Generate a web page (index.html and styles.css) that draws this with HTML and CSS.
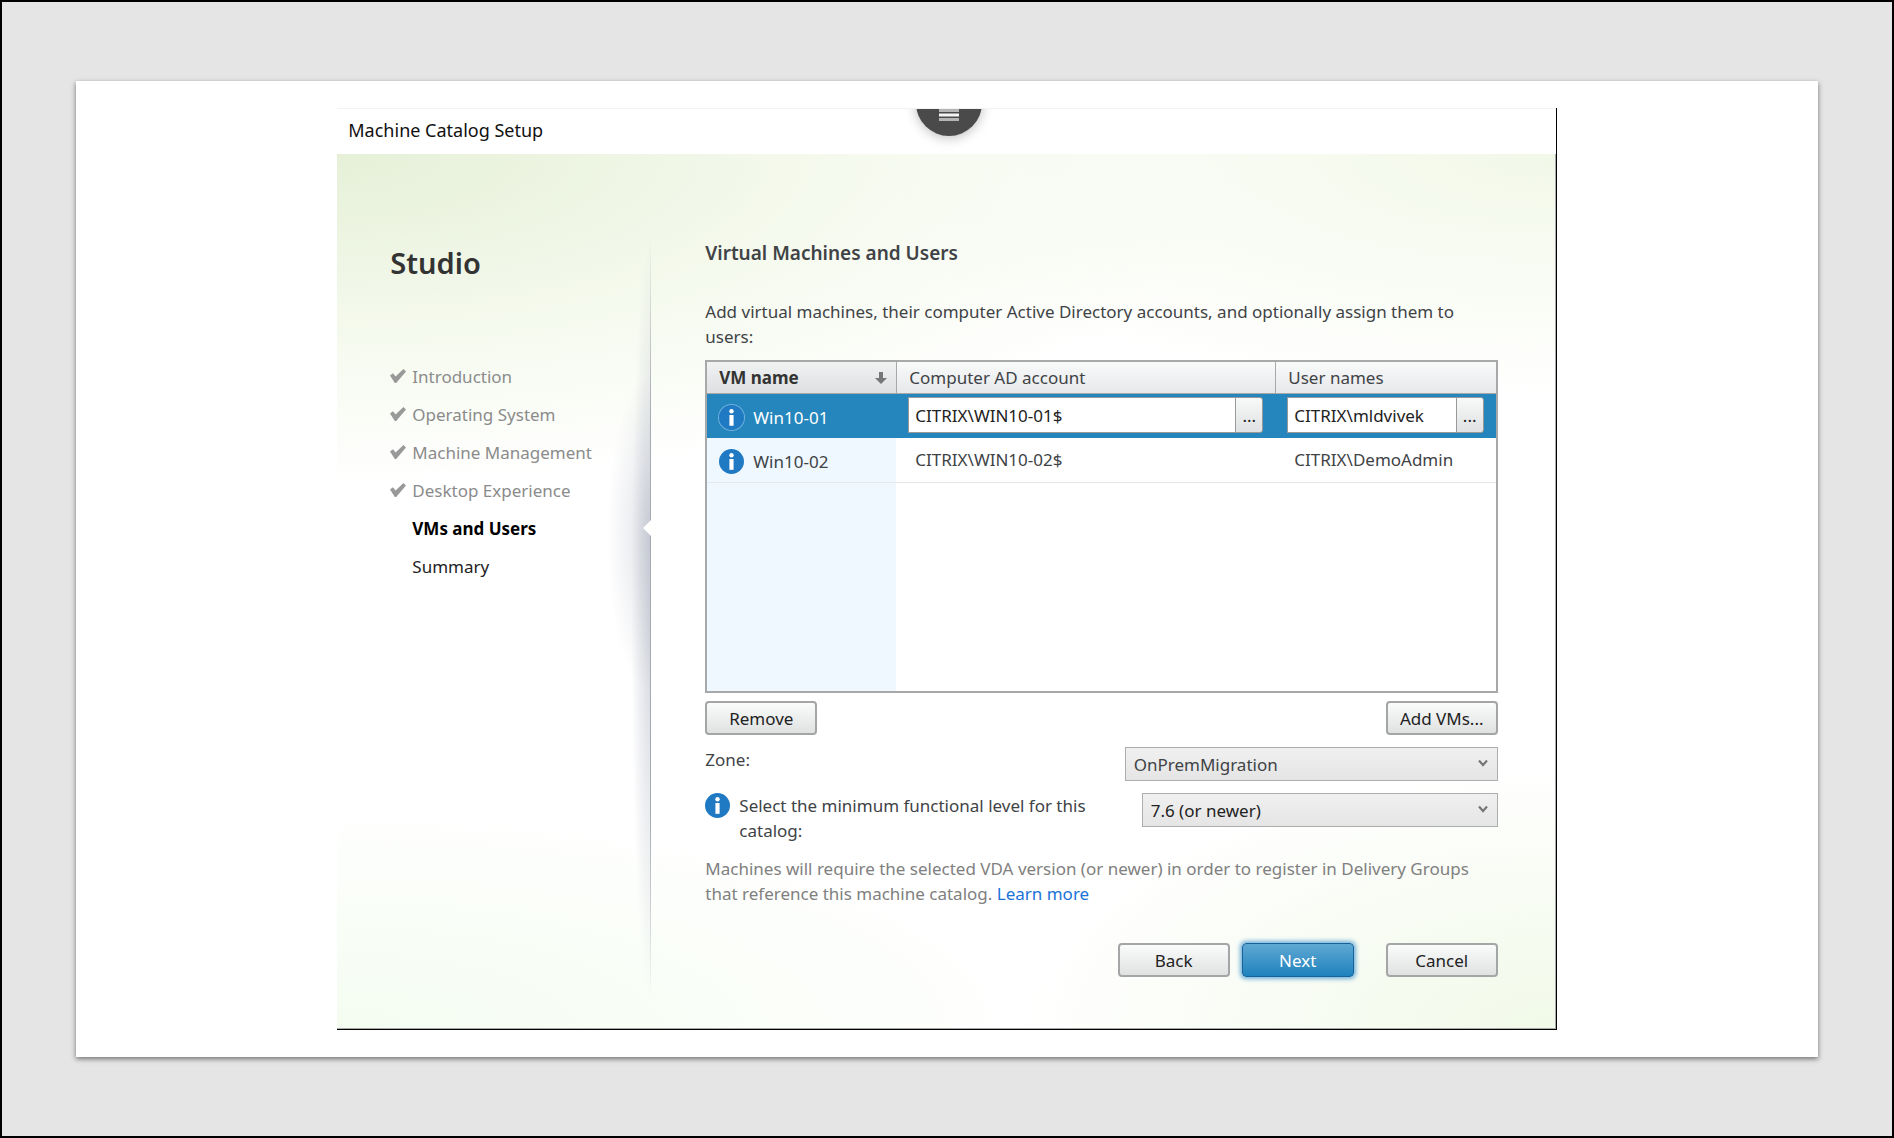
FILE: index.html
```html
<!DOCTYPE html>
<html lang="en">
<head>
<meta charset="utf-8">
<meta name="viewport" content="width=device-width, initial-scale=1">
<title>Machine Catalog Setup</title>
<link rel="stylesheet" href="styles.css">
</head>
<body>
<svg class="sprite" aria-hidden="true">
  <symbol id="check" viewBox="0 0 16 14"><path d="M0 6.5 3 4.2 5.6 7.6 13.4 0 16 2.6 6.2 14 4.8 14Z"/></symbol>
  <symbol id="info" viewBox="0 0 24 24"><circle cx="12" cy="12" r="12" fill="#2079c3"/><circle cx="12" cy="6" r="2.1" fill="#fff"/><path fill="#fff" d="M10 9.6h4v10.4h-4z"/></symbol>
  <symbol id="chevron" viewBox="0 0 10 8"><path d="M1 1.5 5 6 9 1.5" fill="none" stroke="#777" stroke-width="2.2"/></symbol>
</svg>
<main class="card">
  <section class="dialog">
    <header class="titlebar">
      <h1 class="title">Machine Catalog Setup</h1>
      <button class="menu" type="button" aria-label="Menu">
        <svg width="20" height="12" viewBox="0 0 20 12" aria-hidden="true"><path d="M0 1.5h20M0 10.5h20" stroke="#b5b5b5" stroke-width="3"/><path d="M0 6h20" stroke="#f4f4f4" stroke-width="3"/></svg>
      </button>
    </header>
    <div class="body">
      <nav class="sidebar" aria-label="Setup steps">
        <h2 class="product">Studio</h2>
        <ol class="steps">
          <li class="step done"><svg class="tick"><use href="#check"/></svg>Introduction</li>
          <li class="step done"><svg class="tick"><use href="#check"/></svg>Operating System</li>
          <li class="step done"><svg class="tick"><use href="#check"/></svg>Machine Management</li>
          <li class="step done"><svg class="tick"><use href="#check"/></svg>Desktop Experience</li>
          <li class="step current" aria-current="step">VMs and Users</li>
          <li class="step">Summary</li>
        </ol>
      </nav>
      <form class="content">
        <h2 class="heading">Virtual Machines and Users</h2>
        <p class="lead">Add virtual machines, their computer Active Directory accounts, and optionally assign them to users:</p>
        <table class="vms">
          <colgroup><col class="col-name"><col class="col-account"><col class="col-user"></colgroup>
          <thead>
            <tr>
              <th class="sorted" scope="col" aria-sort="descending"><span class="sort">VM name<svg class="arrow" viewBox="0 0 12 12" aria-hidden="true"><path d="M4 0h4v6h4L6 12 0 6h4z" fill="#777"/></svg></span></th>
              <th scope="col">Computer AD account</th>
              <th scope="col">User names</th>
            </tr>
          </thead>
          <tbody>
            <tr class="selected">
              <td><span class="vm"><svg class="info ring"><use href="#info"/></svg>Win10-01</span></td>
              <td><span class="picker"><input type="text" aria-label="Computer AD account" value="CITRIX\WIN10-01$"><button type="button" aria-label="Browse accounts">...</button></span></td>
              <td><span class="picker"><input type="text" aria-label="User names" value="CITRIX\mldvivek"><button type="button" aria-label="Browse users">...</button></span></td>
            </tr>
            <tr class="row">
              <td><span class="vm"><svg class="info"><use href="#info"/></svg>Win10-02</span></td>
              <td class="value">CITRIX\WIN10-02$</td>
              <td class="value">CITRIX\DemoAdmin</td>
            </tr>
            <tr class="filler"><td></td><td></td><td></td></tr>
          </tbody>
        </table>
        <div class="actions">
          <button class="btn" type="button">Remove</button>
          <button class="btn" type="button">Add VMs...</button>
        </div>
        <div class="field">
          <label for="zone">Zone:</label>
          <span class="combo wide"><select id="zone"><option>OnPremMigration</option></select><svg class="chevron"><use href="#chevron"/></svg></span>
        </div>
        <div class="field">
          <svg class="info"><use href="#info"/></svg>
          <label class="level" for="level">Select the minimum functional level for this catalog:</label>
          <span class="combo"><select class="dark" id="level"><option>7.6 (or newer)</option></select><svg class="chevron"><use href="#chevron"/></svg></span>
        </div>
        <p class="note">Machines will require the selected VDA version (or newer) in order to register in Delivery Groups that reference this machine catalog. <a href="#">Learn more</a></p>
        <footer class="footer">
          <button class="btn" type="button">Back</button>
          <button class="btn primary" type="submit">Next</button>
          <button class="btn cancel" type="button">Cancel</button>
        </footer>
      </form>
    </div>
  </section>
</main>
</body>
</html>
```
FILE: styles.css
```css
* { box-sizing: border-box; }
body {
  margin: 0;
  min-height: 100vh;
  padding: 79px 74px;
  border: 2px solid #000;
  background: #e5e5e5;
  color: #404346;
  font: 17px/25px "Noto Sans", "Open Sans", sans-serif;
}
h1, h2, p, ol { margin: 0; padding: 0; font-weight: 400; }
button, input, select { font: inherit; color: inherit; }
.sprite { display: none; }

.card {
  padding: 27px 0;
  background: #fff;
  box-shadow: 0 2px 5px rgba(0, 0, 0, .5);
}
.dialog {
  width: 70%;
  margin: 0 auto;
  border-right: 1px solid #000;
  border-bottom: 1px solid #000;
}
.titlebar {
  position: relative;
  display: flex;
  align-items: center;
  height: 46px;
  padding: 0 11px 2px;
  border-top: 1px solid #f3f3f3;
  overflow: hidden;
}
.title { font-size: 18px; color: #111; }
.menu {
  position: absolute;
  left: 50%;
  bottom: 18px;
  width: 66px;
  height: 66px;
  padding: 0 0 15px;
  margin-left: -30px;
  border: 0;
  border-radius: 50%;
  background: #4a4a4a;
  box-shadow: 0 2px 12px rgba(0, 0, 0, .25);
  display: flex;
  justify-content: center;
  align-items: flex-end;
}

.body {
  display: grid;
  grid-template-columns: 314px 1fr;
  border-right: 1px solid #aaa;
  border-bottom: 1px solid #aaa;
  background:
    radial-gradient(ellipse 76% 38% at 0 0, #e6f0d8, #f4f9ec 50%, rgba(255, 255, 255, 0)),
    radial-gradient(ellipse 60% 28% at 100% 0, #f2f8e8, rgba(255, 255, 255, 0)),
    radial-gradient(ellipse 44% 30% at 100% 100%, #f1f9e8, rgba(255, 255, 255, 0)),
    radial-gradient(ellipse 60% 26% at 0 100%, #f4fcf0, rgba(255, 255, 255, 0)),
    #fff;
}
.sidebar {
  margin: 84px 0 32px;
  padding-left: 53px;
  background:
    linear-gradient(#fff0, #a5aab4 24%, #a5aab4 76%, #fff0) right / 1px 100% no-repeat,
    radial-gradient(ellipse 20px 50% at 100% 50%, rgba(130, 138, 158, .34), rgba(130, 138, 158, 0)),
    radial-gradient(ellipse 44px 160px at 100% 39%, rgba(130, 138, 158, .26), rgba(130, 138, 158, 0));
}
.product { font-size: 29px; line-height: 50px; font-weight: 600; color: #333; }
.steps { margin-top: 69px; list-style: none; }
.step {
  position: relative;
  display: flex;
  align-items: center;
  gap: 6px;
  height: 38px;
  padding-left: 22px;
  color: #222;
}
.done { padding-left: 0; color: #8b8b8b; }
.tick { width: 16px; height: 14px; fill: #999; }
.current { font-weight: 700; color: #000; }
.current::after {
  content: "";
  position: absolute;
  right: 0;
  border: 8px solid transparent;
  border-left: 0;
  border-right-color: #fff;
}

.content { padding: 87px 57px 51px 54px; }
.heading { font-size: 19px; font-weight: 600; }
.lead { margin-top: 33px; }
.vms {
  width: 100%;
  height: 333px;
  margin-top: 11px;
  border: 2px solid #a6a8aa;
  border-collapse: separate;
  border-spacing: 0;
  table-layout: fixed;
  background: #fff;
}
.col-name { width: 189px; }
.col-account { width: 379px; }
th {
  height: 32px;
  padding: 0 12px;
  border-left: 1px solid #a6a8aa;
  border-bottom: 1px solid #a6a8aa;
  background: linear-gradient(#f9fafa, #e6e8ea);
  font-weight: 400;
  text-align: left;
}
th:first-child { border-left: 0; }
.sorted { background: linear-gradient(#f1f2f2, #dddfe1); font-weight: 700; padding-right: 9px; color: #333; }
.sort { display: flex; align-items: center; justify-content: space-between; }
.arrow { width: 12px; height: 12px; }
td { padding: 0 12px; }
td:first-child { background: #eff7ff; }
.selected td { height: 44px; padding-bottom: 2px; background: #2486bc; color: #fff; }
.row td { height: 45px; padding-bottom: 2px; border-bottom: 1px solid #e4e8ea; }
.selected td:first-child, .row td:first-child { padding: 2px 12px 0; }
.row .value { padding-left: 19px; }
.vm { display: flex; align-items: center; gap: 9px; }
.info { flex: none; width: 25px; height: 25px; }
.ring { border-radius: 50%; box-shadow: 0 0 0 1px #6fb0dc; }
.picker { display: flex; height: 36px; color: #222; }
.picker input {
  flex: 1;
  min-width: 0;
  padding: 0 6px;
  border: 1px solid #999;
  background: #fff;
}
.picker button {
  width: 28px;
  padding: 0;
  margin-left: -1px;
  border: 1px solid #999;
  border-radius: 0 3px 3px 0;
  background: linear-gradient(#f8f9f9, #dfe1e2);
}
.actions { display: flex; justify-content: space-between; margin-top: 8px; }
.btn {
  width: 112px;
  height: 34px;
  padding: 0;
  border: 2px solid #a3a5a6;
  border-radius: 4px;
  background: linear-gradient(#fafbfb, #e0e2e2);
  color: #222;
}
.field { display: flex; margin-top: 12px; }
.field label { flex: 1; }
.field .level { padding-left: 9px; }
.combo { position: relative; width: 356px; height: 34px; }
.wide { width: 373px; }
.combo select {
  appearance: none;
  width: 100%;
  height: 100%;
  padding: 0 8px;
  border: 1px solid #adadad;
  border-radius: 0;
  background: linear-gradient(#f0f0f0, #e5e5e5);
}
.combo .dark { color: #222; }
.chevron { position: absolute; right: 10px; top: 12px; width: 10px; height: 8px; }
.note { margin-top: 13px; color: #808080; }
.note a { color: #1a73d8; text-decoration: none; }
.footer { display: flex; justify-content: flex-end; margin-top: 37px; }
.primary {
  margin: 0 32px 0 12px;
  border: 1px solid #17629c;
  background: linear-gradient(#5fa8d3, #1f82bd);
  box-shadow: 0 0 4px 2px #6fb0d8;
  color: #fff;
}
```
